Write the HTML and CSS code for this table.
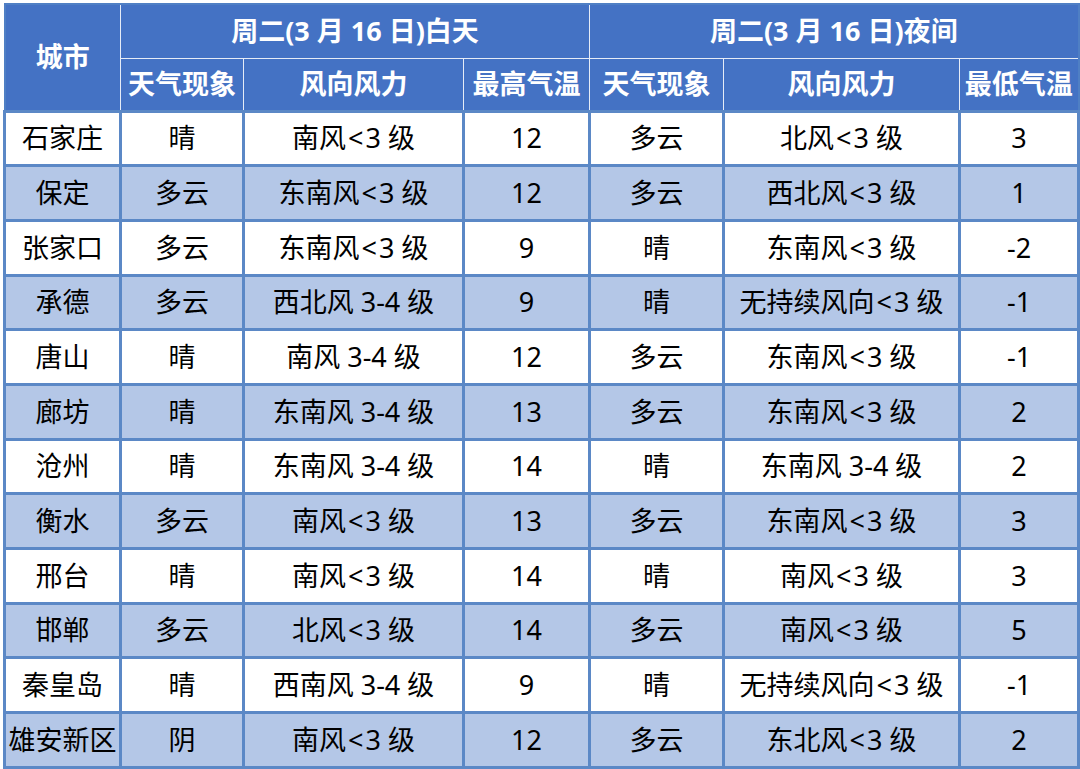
FILE: index.html
```html
<!DOCTYPE html>
<html lang="zh-CN">
<head>
<meta charset="utf-8">
<title>河北天气预报</title>
<link rel="stylesheet" href="styles.css">
</head>
<body>
<table class="wx">
  <colgroup>
    <col class="c-city"><col class="c-w1"><col class="c-f1"><col class="c-t1">
    <col class="c-w2"><col class="c-f2"><col class="c-t2">
  </colgroup>
  <thead>
    <tr class="h1">
      <th rowspan="2">城市</th>
      <th colspan="3">周二(3 月 16 日)白天</th>
      <th colspan="3">周二(3 月 16 日)夜间</th>
    </tr>
    <tr class="h2">
      <th>天气现象</th><th>风向风力</th><th>最高气温</th>
      <th>天气现象</th><th>风向风力</th><th>最低气温</th>
    </tr>
  </thead>
  <tbody>
    <tr><td>石家庄</td><td>晴</td><td>南风<span class="lt">&lt;</span>3 级</td><td>12</td><td>多云</td><td>北风<span class="lt">&lt;</span>3 级</td><td>3</td></tr>
    <tr><td>保定</td><td>多云</td><td>东南风<span class="lt">&lt;</span>3 级</td><td>12</td><td>多云</td><td>西北风<span class="lt">&lt;</span>3 级</td><td>1</td></tr>
    <tr><td>张家口</td><td>多云</td><td>东南风<span class="lt">&lt;</span>3 级</td><td>9</td><td>晴</td><td>东南风<span class="lt">&lt;</span>3 级</td><td>-2</td></tr>
    <tr><td>承德</td><td>多云</td><td>西北风 3-4 级</td><td>9</td><td>晴</td><td>无持续风向<span class="lt">&lt;</span>3 级</td><td>-1</td></tr>
    <tr><td>唐山</td><td>晴</td><td>南风 3-4 级</td><td>12</td><td>多云</td><td>东南风<span class="lt">&lt;</span>3 级</td><td>-1</td></tr>
    <tr><td>廊坊</td><td>晴</td><td>东南风 3-4 级</td><td>13</td><td>多云</td><td>东南风<span class="lt">&lt;</span>3 级</td><td>2</td></tr>
    <tr><td>沧州</td><td>晴</td><td>东南风 3-4 级</td><td>14</td><td>晴</td><td>东南风 3-4 级</td><td>2</td></tr>
    <tr><td>衡水</td><td>多云</td><td>南风<span class="lt">&lt;</span>3 级</td><td>13</td><td>多云</td><td>东南风<span class="lt">&lt;</span>3 级</td><td>3</td></tr>
    <tr><td>邢台</td><td>晴</td><td>南风<span class="lt">&lt;</span>3 级</td><td>14</td><td>晴</td><td>南风<span class="lt">&lt;</span>3 级</td><td>3</td></tr>
    <tr><td>邯郸</td><td>多云</td><td>北风<span class="lt">&lt;</span>3 级</td><td>14</td><td>多云</td><td>南风<span class="lt">&lt;</span>3 级</td><td>5</td></tr>
    <tr><td>秦皇岛</td><td>晴</td><td>西南风 3-4 级</td><td>9</td><td>晴</td><td>无持续风向<span class="lt">&lt;</span>3 级</td><td>-1</td></tr>
    <tr><td>雄安新区</td><td>阴</td><td>南风<span class="lt">&lt;</span>3 级</td><td>12</td><td>多云</td><td>东北风<span class="lt">&lt;</span>3 级</td><td>2</td></tr>
  </tbody>
</table>
</body>
</html>
```
FILE: styles.css
```css
html, body {
  margin: 0;
  padding: 0;
  background: #ffffff;
}
body {
  padding: 3px 4px 0 3px;
  font-family: "Noto Sans", "Noto Sans CJK SC", sans-serif;
}
.wx {
  border-collapse: collapse;
  table-layout: fixed;
  width: 1074px;
  border: 2px solid #4f7fc4;
}
.c-city { width: 116px; }
.c-w1 { width: 123px; }
.c-f1 { width: 220px; }
.c-t1 { width: 126px; }
.c-w2 { width: 134px; }
.c-f2 { width: 236px; }
.c-t2 { width: 119px; }

.wx th {
  background: #4472c4;
  color: #ffffff;
  font-weight: bold;
  font-size: 27px;
  line-height: 1.2;
  padding: 0;
  border: 1px solid #e6ecf7;
  white-space: nowrap;
  overflow: hidden;
}
.h1 { height: 54px; }
.h2 { height: 53px; }
.wx td {
  font-size: 27px;
  line-height: 1.2;
  color: #000000;
  text-align: center;
  padding: 0;
  border: 3px solid #5b88c6;
  white-space: nowrap;
  overflow: hidden;
}
.lt { margin: 0 2px; }
.wx tbody tr { height: 54.7px; background: #ffffff; }
.wx tbody tr:nth-child(even) { background: #b4c7e7; }
```
